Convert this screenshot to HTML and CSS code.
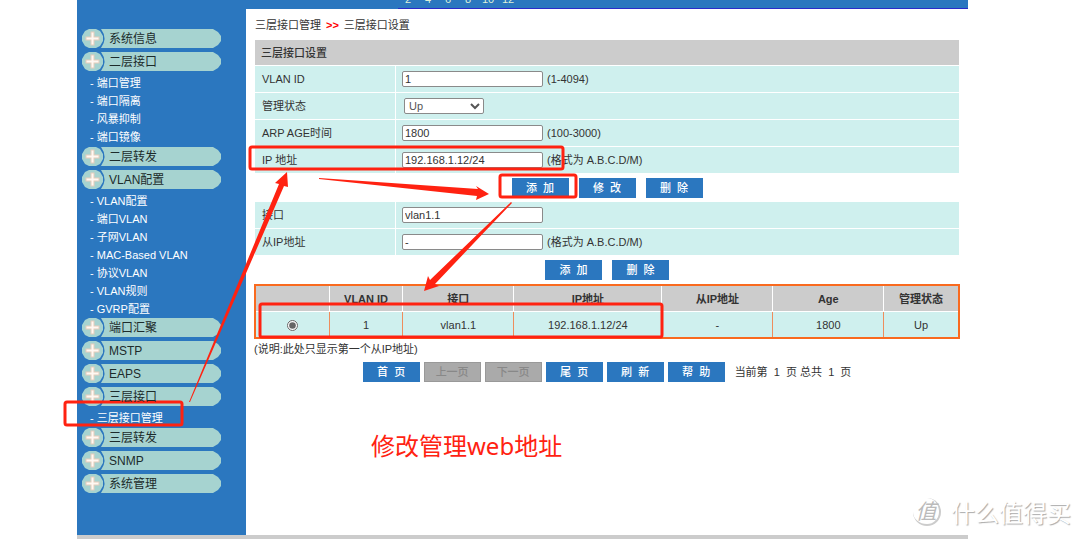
FILE: index.html
```html
<!DOCTYPE html>
<html lang="zh-CN">
<head>
<meta charset="utf-8">
<title>三层接口设置</title>
<link rel="stylesheet" href="styles.css">
</head>
<body>
<svg class="defs" width="0" height="0" aria-hidden="true">
  <symbol id="pill" viewBox="0 0 139 19">
    <path d="M7 0h7l4 2 3 5v5l-3 5-4 2H7l-4-2-3-5V7l3-5z" fill="#a6d3d0"/>
    <path d="M19 0H131L136 3L139 7V12L136 16L131 19H19Q26 9.500 19 0z" fill="#a6d3d0"/>
    <path d="M10.500 2.500v14M3.500 9.500h14" stroke="#e5cdbb" stroke-width="4"/>
    <path d="M10.500 3.500v12M4.500 9.500h12" stroke="#fff8f2" stroke-width="2"/>
  </symbol>
</svg>
<div class="frame">
  <nav class="sidebar">
    <a class="group" href="#"><svg><use href="#pill"/></svg><span>系统信息</span></a>
    <a class="group" href="#"><svg><use href="#pill"/></svg><span>二层接口</span></a>
    <ul>
      <li><a href="#">- 端口管理</a></li>
      <li><a href="#">- 端口隔离</a></li>
      <li><a href="#">- 风暴抑制</a></li>
      <li><a href="#">- 端口镜像</a></li>
    </ul>
    <a class="group" href="#"><svg><use href="#pill"/></svg><span>二层转发</span></a>
    <a class="group" href="#"><svg><use href="#pill"/></svg><span>VLAN配置</span></a>
    <ul>
      <li><a href="#">- VLAN配置</a></li>
      <li><a href="#">- 端口VLAN</a></li>
      <li><a href="#">- 子网VLAN</a></li>
      <li><a href="#">- MAC-Based VLAN</a></li>
      <li><a href="#">- 协议VLAN</a></li>
      <li><a href="#">- VLAN规则</a></li>
      <li><a href="#">- GVRP配置</a></li>
    </ul>
    <a class="group" href="#"><svg><use href="#pill"/></svg><span>端口汇聚</span></a>
    <a class="group" href="#"><svg><use href="#pill"/></svg><span>MSTP</span></a>
    <a class="group" href="#"><svg><use href="#pill"/></svg><span>EAPS</span></a>
    <a class="group" href="#"><svg><use href="#pill"/></svg><span>三层接口</span></a>
    <ul>
      <li><a href="#">- 三层接口管理</a></li>
    </ul>
    <a class="group" href="#"><svg><use href="#pill"/></svg><span>三层转发</span></a>
    <a class="group" href="#"><svg><use href="#pill"/></svg><span>SNMP</span></a>
    <a class="group" href="#"><svg><use href="#pill"/></svg><span>系统管理</span></a>
  </nav>
  <div class="page">
    <header class="topbar">
      <div class="ports"><span>2</span><span>4</span><span>6</span><span>8</span><span>10</span><span>12</span></div>
    </header>
    <main class="content">
      <div class="crumbs"><span>三层接口管理</span><b>&gt;&gt;</b><span>三层接口设置</span></div>
      <form>
        <h1 class="title">三层接口设置</h1>
        <div class="row"><label for="vlan">VLAN ID</label><div class="field"><input id="vlan" type="text" value="1"><span>(1-4094)</span></div></div>
        <div class="row"><label for="state">管理状态</label><div class="field"><select id="state"><option>Up</option><option>Down</option></select></div></div>
        <div class="row"><label for="arp">ARP AGE时间</label><div class="field"><input id="arp" type="text" value="1800"><span>(100-3000)</span></div></div>
        <div class="row"><label for="ip">IP 地址</label><div class="field"><input id="ip" type="text" value="192.168.1.12/24"><span>(格式为 A.B.C.D/M)</span></div></div>
        <div class="actions">
          <button type="button">添&nbsp; 加</button>
          <button type="button">修&nbsp; 改</button>
          <button type="button">删&nbsp; 除</button>
        </div>
        <div class="row"><label for="iface">接口</label><div class="field"><input id="iface" type="text" value="vlan1.1"></div></div>
        <div class="row"><label for="sub">从IP地址</label><div class="field"><input id="sub" type="text" value="-"><span>(格式为 A.B.C.D/M)</span></div></div>
        <div class="actions">
          <button type="button">添&nbsp; 加</button>
          <button type="button">删&nbsp; 除</button>
        </div>
      </form>
      <table class="list">
        <colgroup><col class="c-s"><col class="c-s"><col class="c-m"><col class="c-l"><col class="c-m"><col class="c-m"><col class="c-s"></colgroup>
        <thead><tr><th></th><th>VLAN ID</th><th>接口</th><th>IP地址</th><th>从IP地址</th><th>Age</th><th>管理状态</th></tr></thead>
        <tbody><tr><td><input type="radio" name="pick" aria-label="vlan1.1" checked></td><td>1</td><td>vlan1.1</td><td>192.168.1.12/24</td><td>-</td><td>1800</td><td>Up</td></tr></tbody>
      </table>
      <p class="note">(说明:此处只显示第一个从IP地址)</p>
      <div class="pager">
        <button type="button">首&nbsp; 页</button>
        <button type="button" disabled>上一页</button>
        <button type="button" disabled>下一页</button>
        <button type="button">尾&nbsp; 页</button>
        <button type="button">刷&nbsp; 新</button>
        <button type="button">帮&nbsp; 助</button>
        <span>当前第&nbsp; 1&nbsp; 页 总共&nbsp; 1&nbsp; 页</span>
      </div>
    </main>
  </div>
</div>
<footer class="footer"></footer>

<svg class="marks" width="1080" height="539" viewBox="0 0 1080 539" aria-hidden="true">
  <g fill="none" stroke="#ff2211" stroke-width="3">
    <rect x="65" y="402" width="117" height="23" rx="2"/>
    <rect x="250" y="147" width="313" height="22" rx="2"/>
    <rect x="500" y="175" width="76" height="22" rx="2"/>
    <rect x="260" y="304" width="402" height="33" rx="2"/>
  </g>
  <g fill="#ff2211">
    <path d="M189 402L279 184L275 183L287 172L288 187L284 186L190 402z"/>
    <path d="M319 178L478 189L476 186L489 194L476 200L477 196L319 179z"/>
    <path d="M511 202L430 280L428 276L424 291L439 286L435 284L512 203z"/>
  </g>
</svg>
<p class="caption">修改管理web地址</p>
<div class="watermark"><span class="seal">值</span><span>什么值得买</span></div>
</body>
</html>
```
FILE: styles.css
```css
* { box-sizing: border-box; }
body {
  margin: 0;
  min-height: 100vh;
  display: flex;
  flex-direction: column;
  position: relative;
  overflow: hidden;
  background: #fff;
  color: #333;
  font: 11px/18px "Liberation Sans", "Noto Sans CJK SC", sans-serif;
}
.defs { position: absolute; }
.frame { flex: 1; display: flex; margin: 0 112px 0 77px; }
.footer { height: 4px; margin: 0 112px 0 77px; background: #ccc; }

.sidebar { width: 169px; padding: 29px 5px 0; background: #2b77bf; }
.group {
  display: grid;
  width: 139px;
  height: 19px;
  margin-bottom: 4px;
  color: #1c2b2b;
  font-size: 12px;
  line-height: 20px;
  text-decoration: none;
}
.group > * { grid-area: 1 / 1; }
.group svg { width: 139px; height: 19px; }
.group span { padding-left: 27px; z-index: 1; }
.sidebar ul { margin: 0; padding: 0 0 0 8px; list-style: none; }
.sidebar li { height: 18px; line-height: 16px; }
.sidebar ul:nth-of-type(2) { margin-bottom: -1px; }
.sidebar li a { color: #fff; text-decoration: none; }

.page { flex: 1; min-width: 0; }
.topbar { height: 9px; padding-left: 152px; overflow: hidden; background: #2b77bf; }
.ports {
  display: flex;
  height: 9px;
  border-bottom: 1px solid #2b2bc8;
  color: #dff0d8;
  line-height: 12px;
}
.ports span { width: 20px; margin-top: -7px; text-align: center; }

.content { padding: 7px 9px 0; }
.crumbs { display: flex; gap: 5px; height: 24px; }
.crumbs b { color: #f00; }
.title {
  height: 25px;
  margin: 0 0 1px;
  padding-left: 6px;
  background: #ccc;
  font-size: 11px;
  font-weight: 500;
  line-height: 26px;
}
.row {
  display: grid;
  grid-template-columns: 140px 1fr;
  gap: 1px;
  height: 26px;
  margin-bottom: 1px;
}
.row label, .field { display: flex; align-items: center; padding-left: 7px; background: #cff0ee; }
.field { gap: 4px; padding-left: 6px; }
input[type="text"] {
  width: 141px;
  height: 16px;
  padding: 0 2px;
  border: 1px solid #8a8a8a;
  border-radius: 2px;
  background: #fff;
  color: #333;
  font: inherit;
}
select {
  width: 80px;
  height: 16px;
  margin-left: 2px;
  padding: 0;
  border: 1px solid #8a8a8a;
  border-radius: 2px;
  background: #fff;
  color: #555;
  font: inherit;
}
.actions { display: flex; justify-content: center; gap: 10px; padding: 4px 0; }
button {
  width: 57px;
  height: 20px;
  padding: 0;
  border: 0;
  background: #2b77bf;
  color: #fff;
  font: 500 11px/20px "Liberation Sans", "Noto Sans CJK SC", sans-serif;
}
button:disabled { border: 1px solid #999; background: #aaa; color: #888; line-height: 18px; }

.list {
  width: calc(100% + 2px);
  margin: 0 -1px;
  table-layout: fixed;
  border-collapse: separate;
  border-spacing: 0;
  border: 2px solid #f96a1f;
  text-align: center;
}
.c-s { width: 10.5%; }
.c-m { width: 15.8%; }
.c-l { width: 21.1%; }
.list th { height: 26px; padding: 0; border-right: 1px solid #fff; border-bottom: 1px solid #fff; background: #ccc; }
.list td { height: 25px; padding: 0; border-right: 1px solid #ef8d5c; background: #cff0ee; }
.list th:last-child, .list td:last-child { border-right: 0; }
.list input { width: 11px; height: 11px; margin: 0; vertical-align: middle; accent-color: #666; }
.note { margin: 0 -1px; line-height: 20px; }
.pager { display: flex; justify-content: center; align-items: center; gap: 4px; padding-top: 3px; }
.pager span { margin-left: 6px; white-space: nowrap; }

.marks { position: absolute; left: 0; top: 0; }
.caption {
  position: absolute;
  left: 371px;
  top: 430px;
  margin: 0;
  color: #ff2211;
  font: 24px/32px "Noto Sans", "Noto Sans CJK SC", sans-serif;
}
.watermark {
  position: absolute;
  right: 9px;
  bottom: 11px;
  display: flex;
  align-items: center;
  gap: 10px;
  color: #fff;
  font: 24px/32px "Noto Sans CJK SC", sans-serif;
  text-shadow: 1px 1px 1px #aaa;
}
.seal {
  width: 28px;
  height: 28px;
  border-right: 2px solid #ccc;
  border-bottom: 2px solid #ccc;
  border-radius: 50%;
  color: #bbb;
  font-size: 21px;
  font-style: italic;
  line-height: 24px;
  text-align: center;
  text-shadow: none;
}
```
